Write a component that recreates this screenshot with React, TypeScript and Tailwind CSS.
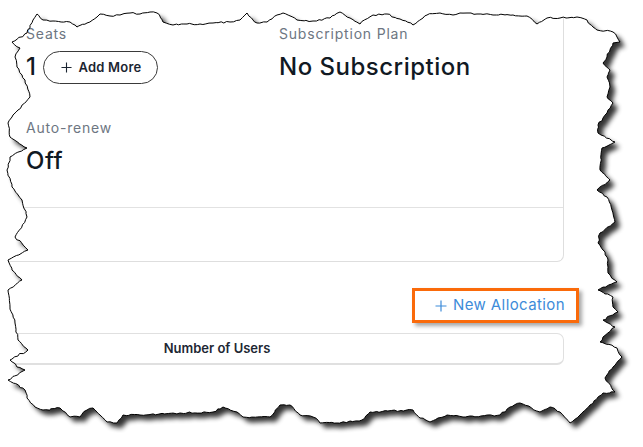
import React from 'react';

type Pt = [number, number];

// rough outline of the torn screenshot edge, clockwise from top-left
const edge: Pt[] = [
  [37, 14], [43, 20], [53, 21], [70, 22], [77, 27], [87, 23], [97, 17], [100, 14], [110, 16], [120, 15],
  [130, 13], [140, 14], [150, 12], [157, 13], [163, 22], [173, 25], [187, 24], [200, 24], [213, 23],
  [230, 22], [240, 20], [247, 13], [253, 20], [257, 23], [267, 22], [277, 15], [283, 13], [297, 20],
  [313, 21], [330, 18], [340, 12], [350, 18], [360, 24], [373, 15], [387, 14], [400, 19], [413, 25],
  [427, 15], [440, 13], [453, 15], [460, 13], [467, 13], [477, 14], [493, 15], [513, 15], [527, 16],
  [537, 24], [547, 18], [560, 18], [577, 17], [587, 20], [593, 27], [597, 30], [613, 32], [617, 37],
  [620, 42], [613, 43], [610, 50], [607, 57], [603, 63], [610, 70], [607, 77], [610, 87], [607, 97],
  [613, 103], [607, 113], [603, 118], [598, 125], [598, 133], [615, 142], [602, 148], [600, 170],
  [610, 180], [597, 190], [607, 197], [612, 210], [615, 222], [600, 233], [598, 243], [603, 250],
  [608, 260], [608, 273], [617, 282], [598, 290], [613, 297], [613, 307], [618, 312], [603, 320],
  [615, 327], [603, 337], [600, 342], [617, 348], [622, 357], [613, 367], [605, 378], [615, 392],
  [603, 393], [590, 405], [580, 415], [570, 423], [560, 412], [550, 407], [540, 412], [520, 403],
  [510, 407], [500, 415], [463, 417], [447, 415], [430, 422], [420, 418], [413, 410], [370, 412],
  [362, 420], [337, 423], [320, 423], [313, 417], [300, 415], [290, 405], [280, 405], [270, 417],
  [243, 417], [237, 412], [223, 407], [213, 412], [180, 413], [140, 415], [123, 415], [117, 423],
  [107, 422], [100, 415], [93, 408], [87, 410], [80, 417], [70, 417], [60, 408], [43, 410], [35, 407],
  [27, 398], [25, 390], [8, 380], [25, 370], [17, 367], [10, 360], [28, 350], [18, 340], [15, 323],
  [10, 307], [8, 290], [22, 280], [12, 270], [8, 260], [28, 250], [15, 237], [27, 217], [22, 200],
  [12, 187], [7, 170], [10, 157], [27, 148], [10, 137], [8, 123], [13, 115], [18, 110], [30, 97],
  [25, 80], [17, 67], [15, 57], [20, 48], [12, 42], [27, 33], [33, 20],
];

function tornPath(points: Pt[]) {
  let seed = 11;
  const rnd = () => {
    seed = (seed * 9301 + 49297) % 233280;
    return seed / 233280 - 0.5;
  };
  const out: Pt[] = [];
  for (let i = 0; i < points.length; i++) {
    const [ax, ay] = points[i];
    const [bx, by] = points[(i + 1) % points.length];
    const steps = Math.max(1, Math.round(Math.hypot(bx - ax, by - ay) / 3));
    for (let s = 0; s < steps; s++) {
      const t = s / steps;
      const j = s === 0 ? 0 : 1.6;
      out.push([ax + (bx - ax) * t + rnd() * j, ay + (by - ay) * t + rnd() * j]);
    }
  }
  return out.map(([x, y], i) => `${i ? 'L' : 'M'}${x.toFixed(1)} ${y.toFixed(1)}`).join(' ') + ' Z';
}

const TornEdge = () => {
  const d = tornPath(edge);
  return (
    <svg className="absolute inset-0 pointer-events-none" width={643} height={447}>
      <defs>
        <mask id="outside">
          <rect width={643} height={447} fill="white" />
          <path d={d} fill="black" />
        </mask>
        <filter id="soft" x="-10%" y="-10%" width="120%" height="120%">
          <feGaussianBlur stdDeviation="2.5" />
        </filter>
      </defs>
      <path d={`M0 0H643V447H0Z ${d}`} fill="white" fillRule="evenodd" />
      <g mask="url(#outside)">
        <path d={d} transform="translate(5 5)" fill="#000" opacity={0.8} filter="url(#soft)" />
      </g>
      <path d={d} fill="none" stroke="#000" strokeWidth={1} />
    </svg>
  );
};

const Plus = ({ size, color }: { size: number; color: string }) => (
  <svg width={size} height={size} viewBox="0 0 12 12" fill="none" stroke={color} strokeWidth={1.2}>
    <path d="M6 0.5V11.5M0.5 6H11.5" />
  </svg>
);

const Field = ({ label, children }: { label: string; children: React.ReactNode }) => (
  <div className="flex flex-col">
    <span className="text-[14px] leading-[20px] tracking-[0.8px] text-[#6d7682]">{label}</span>
    <div className="mt-[6px] h-[34px] flex items-center text-[24px] leading-[34px] font-medium tracking-[0.5px] text-[#111923]">
      {children}
    </div>
  </div>
);

export default function App() {
  return (
    <div className="relative w-[643px] h-[447px] overflow-hidden bg-white font-['Inter',sans-serif]">
      <div className="w-[564px] h-[262px] flex flex-col rounded-br-[7px] border-r border-b border-[#dedede]">
        <div className="h-[207px] grid grid-cols-[253px_1fr] content-start gap-y-[34px] pl-[26px] pt-[24px]">
          <Field label="Seats">
            <span>1</span>
            <button className="ml-[7px] w-[115px] h-[33px] rounded-full border border-[#3a3a3a] flex items-center justify-center gap-[7px] text-[13px] font-semibold tracking-[0.2px] text-[#1b2531]">
              <Plus size={11} color="#1b2531" />
              Add More
            </button>
          </Field>
          <Field label="Subscription Plan">
            <span>No Subscription</span>
          </Field>
          <Field label="Auto-renew">
            <span>Off</span>
          </Field>
        </div>
        <div className="flex-1 border-t border-[#e2e2e2]" />
      </div>

      <div className="mt-[26px] ml-[412px] w-[167px] h-[35px] border-[3px] border-[#fa6a0a] shadow-[3px_3px_4px_rgba(0,0,0,0.35)] flex items-center justify-end gap-[6px] pr-[11px] text-[15px] tracking-[0.4px] text-[#3d8bd9]">
        <Plus size={12} color="#3d8bd9" />
        New Allocation
      </div>

      <div className="mt-[10px] w-[564px] h-[32px] flex items-center rounded-r-[7px] border border-[#e0e0e0] border-b-2">
        <span className="w-[432px] text-center text-[13px] font-semibold text-[#1d2733]">Number of Users</span>
      </div>

      <TornEdge />
    </div>
  );
}
